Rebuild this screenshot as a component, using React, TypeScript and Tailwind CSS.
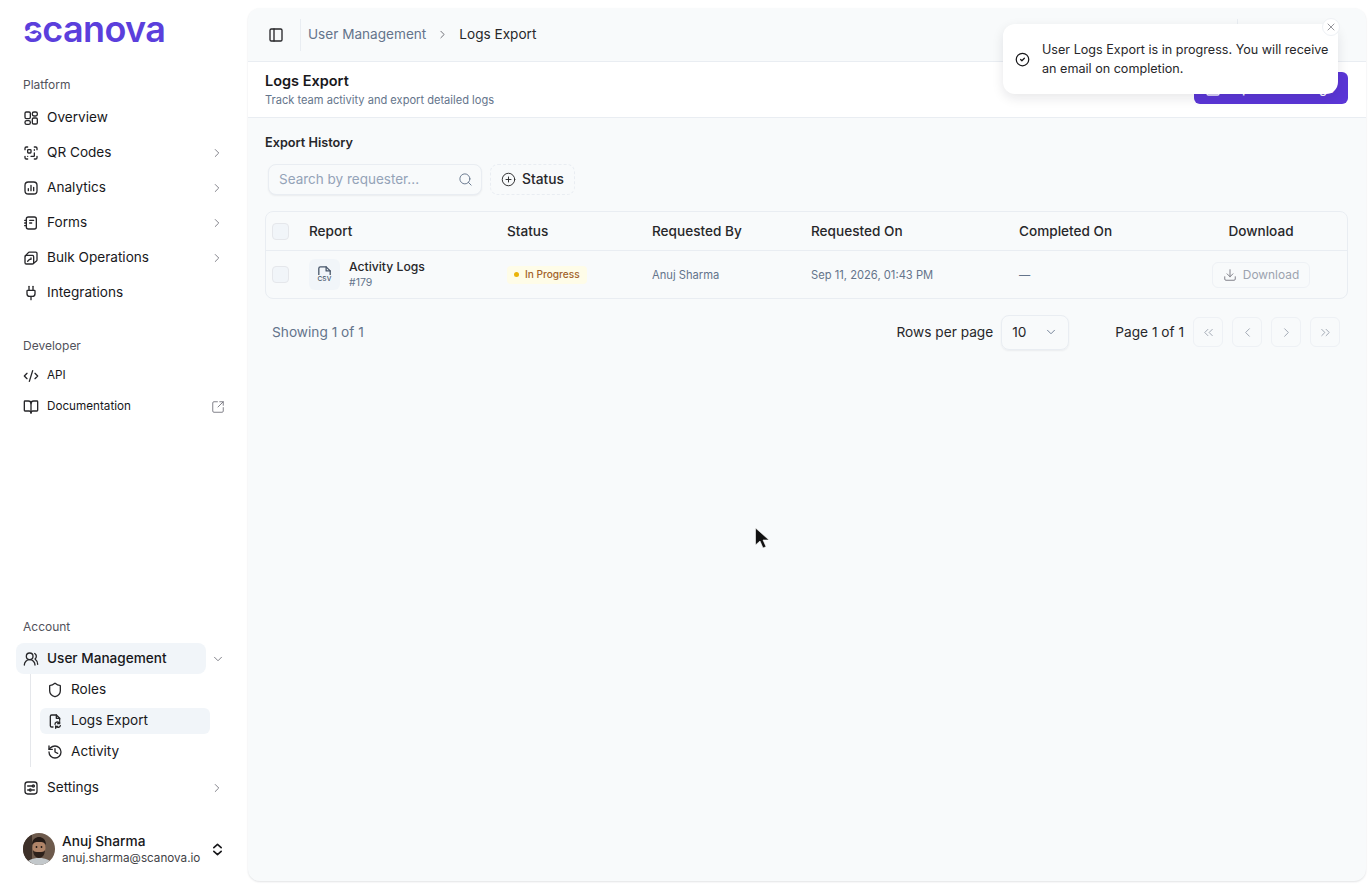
import React from "react";
import {
  ScanQrCode, Plug, CodeXml, BookOpen, SquareArrowOutUpRight, UsersRound, Shield, History,
  PanelLeft, Search, CirclePlus, ChevronRight, ChevronDown, Download,
  ChevronsLeft, ChevronLeft, ChevronsRight, CircleCheck, X,
} from "lucide-react";

const svgProps = { fill: "none", stroke: "currentColor", strokeWidth: 2, strokeLinecap: "round" as const, strokeLinejoin: "round" as const, viewBox: "0 0 24 24" };

const OverviewIcon = ({ className }: { className?: string }) => (
  <svg {...svgProps} className={className}><rect x="3" y="3" width="8" height="10" rx="2" /><rect x="14" y="3" width="7.500" height="6" rx="2.500" /><rect x="14" y="12" width="7.500" height="9" rx="2" /><rect x="3" y="16" width="8" height="5.500" rx="2.500" /></svg>
);
const AnalyticsIcon = ({ className }: { className?: string }) => (
  <svg {...svgProps} className={className}><rect x="3" y="3" width="18" height="18" rx="5" /><path d="M8 16v-3M12 16V8M16 16v-5" /></svg>
);
const FormsIcon = ({ className }: { className?: string }) => (
  <svg {...svgProps} className={className}><path d="M8 3h9a3 3 0 0 1 3 3v12a3 3 0 0 1-3 3H8a3 3 0 0 1-3-3V6a3 3 0 0 1 3-3Z" /><path d="M2.500 8H5M2.500 12H5M2.500 16H5M10 8h6M10 12h3" /></svg>
);
const BulkIcon = ({ className }: { className?: string }) => (
  <svg {...svgProps} className={className}><rect x="3" y="8" width="13" height="13" rx="2" /><path d="M3.500 9 8 4a2 2 0 0 1 1.500-.8H19a2 2 0 0 1 2 2V15a2 2 0 0 1-.8 1.500L16 20" /><path d="M7 17l3-3h2v-2" /></svg>
);
const LogsIcon = ({ className }: { className?: string }) => (
  <svg {...svgProps} className={className}><path d="M9 21H7a2 2 0 0 1-2-2V5a2 2 0 0 1 2-2h7l5 5v3" /><path d="M14 3v5h5" /><path d="M12 17a3.500 3.500 0 0 1 6-2.400l1 1M19 13v3h-3M20 19a3.500 3.500 0 0 1-6 1.400l-1-1M13 23v-3h3" /></svg>
);
const SettingsIcon = ({ className }: { className?: string }) => (
  <svg {...svgProps} className={className}><rect x="3" y="3" width="18" height="18" rx="4" /><path d="M7 9h7M7 15h3M14 15h3M17 9h.01" /><circle cx="15.500" cy="9" r="1.500" /><circle cx="11" cy="15" r="1.500" /></svg>
);
const CsvFile = () => (
  <span className="flex flex-col items-center leading-none text-[#475569]">
    <svg {...svgProps} strokeWidth={1.6} className="w-[13px] h-[9px]" viewBox="4 2 16 11"><path d="M5 13V5a2 2 0 0 1 2-2h7l5 5v5" /><path d="M14 3v5h5" /></svg>
    <span className="text-[6.500px] font-medium tracking-[0.2px] mt-[1px]">CSV</span>
  </span>
);

const Avatar = () => (
  <svg viewBox="0 0 32 32" className="w-[32px] h-[32px] rounded-full shrink-0">
    <rect width="32" height="32" fill="#6d5a4c" />
    <rect x="0" y="0" width="9" height="32" fill="#3d3029" />
    <path d="M3 32c1-5 6-7 13-7s12 2 13 7Z" fill="#c3c8cb" />
    <ellipse cx="16" cy="15" rx="6.500" ry="8" fill="#b08468" />
    <path d="M9 12c0-6 4-8 7-8s7 2 7 8c-2-3-3-3-7-3s-5 0-7 3Z" fill="#241a16" />
    <path d="M10 17c1 2 3 2 6 2s5 0 6-2c0 5-3 8-6 8s-6-3-6-8Z" fill="#2c201a" />
    <circle cx="13.500" cy="14" r="0.900" fill="#1c1412" /><circle cx="18.500" cy="14" r="0.900" fill="#1c1412" />
  </svg>
);

const NavItem = ({ icon: Icon, label, chevron }: { icon: React.ComponentType<{ className?: string }>; label: string; chevron?: boolean }) => (
  <div className="flex items-center h-[35px] pl-[23px] pr-[24px] text-[13.600px] text-[#18181b]">
    <Icon className="w-[16px] h-[16px] mr-[8px] text-[#27272a] shrink-0" />
    <span className="flex-1">{label}</span>
    <span className="w-[14px]">{chevron && <ChevronRight strokeWidth={1.500} className="w-[14px] h-[14px] text-[#71717a]" />}</span>
  </div>
);

const SubItem = ({ icon: Icon, label, active }: { icon: React.ComponentType<{ className?: string }>; label: string; active?: boolean }) => (
  <div className={`flex items-center h-[26px] ml-[40px] mr-[38px] pl-[7px] rounded-md text-[13.600px] text-[#18181b] ${active ? "bg-[#f1f5f9]" : ""}`}>
    <Icon className="w-[16px] h-[16px] mr-[8px] text-[#27272a] shrink-0" />
    <span>{label}</span>
  </div>
);

const PagerButton = ({ icon: Icon }: { icon: React.ComponentType<{ className?: string }> }) => (
  <div className="w-[30px] h-[30px] rounded-md border border-[#eef1f5] flex items-center justify-center text-[#9ca3af]">
    <Icon strokeWidth={1.500} className="w-[15px] h-[15px]" />
  </div>
);

const SectionLabel = ({ children, className }: { children: React.ReactNode; className?: string }) => (
  <div className={`pl-[23px] text-[12px] leading-[16px] text-[#52525b] ${className ?? ""}`}>{children}</div>
);

export default function App() {
  return (
    <div className="relative flex h-[888px] w-full overflow-hidden bg-white font-['Inter',sans-serif]">
      <aside className="w-[248px] shrink-0 flex flex-col">
        <div className="relative pl-[23px] pt-[10px] h-[77px]">
          <div className="text-[36px] leading-[38px] font-semibold tracking-[-0.6px] text-[#5b3fdc]">scanova</div>
          <span className="absolute left-[29px] top-[26px] w-[3px] h-[9px] bg-white rotate-[60deg]" />
          <span className="absolute left-[34px] top-[32px] w-[3px] h-[6px] bg-white rotate-[60deg]" />
        </div>
        <SectionLabel className="mb-[7px]">Platform</SectionLabel>
        <NavItem icon={OverviewIcon} label="Overview" />
        <NavItem icon={ScanQrCode} label="QR Codes" chevron />
        <NavItem icon={AnalyticsIcon} label="Analytics" chevron />
        <NavItem icon={FormsIcon} label="Forms" chevron />
        <NavItem icon={BulkIcon} label="Bulk Operations" chevron />
        <NavItem icon={Plug} label="Integrations" />
        <SectionLabel className="mt-[28px] mb-[6px]">Developer</SectionLabel>
        <div className="flex items-center h-[31px] pl-[23px] text-[11.700px] text-[#18181b]">
          <CodeXml className="w-[16px] h-[16px] mr-[8px] text-[#27272a]" />API
        </div>
        <div className="flex items-center h-[31px] pl-[23px] pr-[23px] text-[11.700px] text-[#18181b]">
          <BookOpen className="w-[16px] h-[16px] mr-[8px] text-[#27272a]" />
          <span className="flex-1">Documentation</span>
          <SquareArrowOutUpRight strokeWidth={1.500} className="w-[14px] h-[14px] text-[#71717a]" />
        </div>

        <div className="mt-auto">
          <SectionLabel className="mb-[8px]">Account</SectionLabel>
          <div className="flex items-center h-[31px]">
            <div className="flex items-center h-[31px] w-[190px] ml-[16px] pl-[7px] rounded-lg bg-[#f1f5f9] text-[13.600px] font-medium text-[#18181b]">
              <UsersRound className="w-[16px] h-[16px] mr-[8px] text-[#27272a]" />User Management
            </div>
            <ChevronDown strokeWidth={1.500} className="w-[14px] h-[14px] ml-[5px] text-[#71717a]" />
          </div>
          <div className="relative flex flex-col gap-[5px] py-[2.500px]">
            <div className="absolute left-[30px] top-0 bottom-0 w-px bg-[#e5e7eb]" />
            <SubItem icon={Shield} label="Roles" />
            <SubItem icon={LogsIcon} label="Logs Export" active />
            <SubItem icon={History} label="Activity" />
          </div>
          <div className="mt-[3px]"><NavItem icon={SettingsIcon} label="Settings" chevron /></div>
          <div className="flex items-center h-[32px] mt-[28px] mb-[23px] pl-[23px]">
            <Avatar />
            <div className="ml-[7px] flex-1 min-w-0">
              <div className="text-[13.700px] leading-[17px] font-medium text-[#18181b]">Anuj Sharma</div>
              <div className="text-[11.700px] leading-[16px] text-[#3f3f46]">anuj.sharma@scanova.io</div>
            </div>
            <svg {...svgProps} strokeWidth={1.800} viewBox="0 0 12 14" className="w-[11px] h-[13px] mr-[25px] text-[#18181b]"><path d="M2 5l4-3.500L10 5M2 9l4 3.500L10 9" /></svg>
          </div>
        </div>
      </aside>

      <main className="flex-1 flex flex-col mt-[8px] mb-[7px] mr-[6px] rounded-xl bg-[#f8fafb] shadow-[0_1px_2px_rgba(15,23,42,0.12)] overflow-hidden">
        <header className="h-[54px] shrink-0 flex items-center border-b border-[#e9edf2] text-[13.600px]">
          <PanelLeft className="w-[16px] h-[16px] ml-[20px] text-[#27272a]" />
          <div className="w-px h-[32px] bg-[#e9edf2] ml-[16px] mr-[7px]" />
          <span className="text-[#64748b]">User Management</span>
          <ChevronRight strokeWidth={1.500} className="w-[13px] h-[13px] mx-[10px] text-[#52525b]" />
          <span className="text-[#27272a]">Logs Export</span>
          <div className="ml-auto mr-[128px] w-px h-[32px] bg-[#e9edf2]" />
        </header>

        <section className="h-[56px] shrink-0 bg-white border-b border-[#e9edf2] flex items-start justify-between pl-[17px] pr-[18px]">
          <div className="pt-[9px]">
            <div className="text-[14.500px] leading-[20px] font-semibold text-[#18181b]">Logs Export</div>
            <div className="text-[11.100px] leading-[16px] mt-[1px] text-[#64748b]">Track team activity and export detailed logs</div>
          </div>
          <div className="mt-[10px] w-[154px] h-[32px] rounded-md bg-[#5b36d6] flex items-center pl-[11px] pt-[1px] gap-[6px] text-[13px] font-medium text-white">
            <Download className="w-[16px] h-[16px]" />Export User Logs
          </div>
        </section>

        <section className="flex-1 pl-[17px] pr-[18px]">
          <h2 className="text-[12.700px] leading-[18px] font-semibold text-[#27272a] mt-[16px]">Export History</h2>
          <div className="flex items-center gap-[8px] mt-[11px] ml-[3px] h-[32px]">
            <div className="w-[214px] h-[31px] rounded-lg border border-[#e9edf2] bg-[#f8fafb] shadow-[0_1px_2px_rgba(15,23,42,0.06)] flex items-center justify-between pl-[10px] pr-[8px]">
              <span className="text-[13.500px] text-[#94a3b8]">Search by requester...</span>
              <Search strokeWidth={1.500} className="w-[15px] h-[15px] text-[#64748b]" />
            </div>
            <div className="h-[31px] w-[85px] rounded-lg border border-dashed border-[#e9edf2] flex items-center justify-center gap-[6px] text-[13.800px] font-medium text-[#27272a]">
              <CirclePlus strokeWidth={1.500} className="w-[15px] h-[15px]" />Status
            </div>
          </div>

          <div className="mt-[16px] rounded-lg border border-[#e9edf2] overflow-hidden">
            <div className="grid grid-cols-[43px_198px_145px_159px_208px_156px_1fr] items-center h-[39px] border-b border-[#e9edf2] text-[13.600px] font-medium text-[#27272a]">
              <div className="pl-[6px]"><div className="w-[17px] h-[17px] rounded border border-[#e5e7eb] bg-[#f1f5f9]" /></div>
              <div>Report</div>
              <div>Status</div>
              <div>Requested By</div>
              <div>Requested On</div>
              <div>Completed On</div>
              <div className="text-center">Download</div>
            </div>
            <div className="grid grid-cols-[43px_198px_145px_159px_208px_156px_1fr] items-center h-[47px] text-[11.200px]">
              <div className="pl-[6px]"><div className="w-[17px] h-[17px] rounded border border-[#e5e7eb] bg-[#f1f5f9]" /></div>
              <div className="flex items-center gap-[9px]">
                <div className="w-[31px] h-[31px] rounded-md bg-[#f1f5f9] flex items-center justify-center"><CsvFile /></div>
                <div className="pt-[1px]">
                  <div className="text-[12.200px] leading-[16px] font-medium text-[#27272a]">Activity Logs</div>
                  <div className="text-[10.500px] leading-[16px] text-[#64748b]">#179</div>
                </div>
              </div>
              <div>
                <span className="inline-flex items-center gap-[6px] h-[18px] px-[7px] rounded bg-[#fefce8] text-[10.100px] font-medium text-[#a16229]">
                  <span className="w-[5px] h-[5px] rounded-full bg-[#eab308]" />In Progress
                </span>
              </div>
              <div className="pt-[2px] text-[#64748b]">Anuj Sharma</div>
              <div className="pt-[2px] text-[#64748b]">Sep 11, 2026, 01:43 PM</div>
              <div className="pt-[2px] text-[#64748b]">—</div>
              <div className="flex justify-center">
                <div className="h-[26px] w-[98px] rounded-md border border-[#eef1f5] flex items-center justify-center gap-[6px] text-[11.900px] text-[#9ca3af]">
                  <Download strokeWidth={1.500} className="w-[14px] h-[14px] text-[#71717a]" />Download
                </div>
              </div>
            </div>
          </div>

          <div className="flex items-center h-[36px] mt-[15px] pl-[7px] pr-[8px] text-[13.700px] text-[#27272a]">
            <span className="text-[#64748b]">Showing 1 of 1</span>
            <span className="ml-auto mr-[8px]">Rows per page</span>
            <div className="w-[68px] h-[35px] rounded-lg border border-[#e9edf2] shadow-[0_1px_2px_rgba(15,23,42,0.06)] flex items-center justify-between pl-[10px] pr-[10px] mr-[46px]">
              10<ChevronDown strokeWidth={1.500} className="w-[14px] h-[14px] text-[#64748b]" />
            </div>
            <span className="mr-[9px]">Page 1 of 1</span>
            <div className="flex gap-[9px]">
              <PagerButton icon={ChevronsLeft} />
              <PagerButton icon={ChevronLeft} />
              <PagerButton icon={ChevronRight} />
              <PagerButton icon={ChevronsRight} />
            </div>
          </div>
        </section>
      </main>

      <div className="absolute left-[1003px] top-[24px] w-[335px] h-[70px] rounded-xl bg-white shadow-[0_4px_12px_rgba(15,23,42,0.1)] flex items-center pl-[12px] pr-[6px] gap-[12px]">
        <CircleCheck className="w-[15px] h-[15px] shrink-0 text-[#18181b]" />
        <div className="text-[12.600px] leading-[19px] text-[#27272a]">User Logs Export is in progress. You will receive an email on completion.</div>
        <div className="absolute -right-[2px] -top-[6px] w-[18px] h-[18px] rounded-full bg-white border border-[#eef1f5] flex items-center justify-center text-[#71717a]">
          <X strokeWidth={1.500} className="w-[12px] h-[12px]" />
        </div>
      </div>

      <svg viewBox="0 0 16 22" className="absolute left-[754px] top-[526px] w-[16px] h-[24px]">
        <path d="M1.500 1v17l4.500-4 3 7 3-1.300-3-6.700h6Z" fill="#111" stroke="#fff" strokeWidth="0.600" />
      </svg>
    </div>
  );
}
